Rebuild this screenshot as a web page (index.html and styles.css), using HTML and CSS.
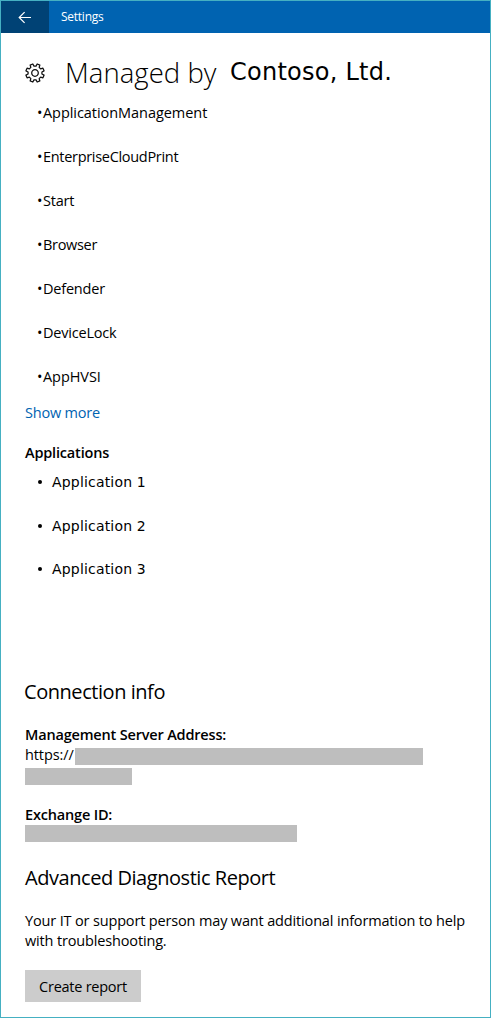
FILE: index.html
```html
<!DOCTYPE html>
<html lang="en">
<head>
<meta charset="utf-8">
<title>Settings</title>
<link rel="stylesheet" href="styles.css">
</head>
<body>
<div class="window">
  <header class="titlebar">
    <div class="back">
      <svg width="14" height="13" viewBox="0 0 14 13" fill="none" stroke="#fff" stroke-width="1.2"><path d="M13 6.5H1.2M6.6 1.1L1.2 6.5l5.4 5.4"/></svg>
    </div>
    <span class="titlebar-text">Settings</span>
  </header>
  <main class="content">
    <div class="heading">
      <svg class="gear" width="20" height="20" viewBox="-10 -10 20 20" fill="none" stroke="#111" stroke-width="1.25" stroke-linejoin="round"><path d="M6.92 1.03L9.04 2.17L7.93 4.86L5.63 4.16L4.16 5.63L4.86 7.93L2.17 9.04L1.03 6.92H-1.03L-2.17 9.04L-4.86 7.93L-4.16 5.63L-5.63 4.16L-7.93 4.86L-9.04 2.17L-6.92 1.03V-1.03L-9.04 -2.17L-7.93 -4.86L-5.63 -4.16L-4.16 -5.63L-4.86 -7.93L-2.17 -9.04L-1.03 -6.92H1.03L2.17 -9.04L4.86 -7.93L4.16 -5.63L5.63 -4.16L7.93 -4.86L9.04 -2.17L6.92 -1.03Z"/><circle r="3.3"/></svg>
      <h1 class="title">Managed by</h1>
      <span class="org">Contoso, Ltd.</span>
    </div>
    <ul class="policies">
      <li class="loose"><span class="bullet">•</span>ApplicationManagement</li>
      <li class="tight"><span class="bullet">•</span>EnterpriseCloudPrint</li>
      <li><span class="bullet">•</span>Start</li>
      <li class="tight"><span class="bullet">•</span>Browser</li>
      <li><span class="bullet">•</span>Defender</li>
      <li><span class="bullet">•</span>DeviceLock</li>
      <li class="loose"><span class="bullet">•</span>AppHVSI</li>
    </ul>
    <a class="more">Show more</a>
    <h3 class="label apps-label">Applications</h3>
    <ul class="apps">
      <li><i class="dot"></i>Application 1</li>
      <li><i class="dot"></i>Application 2</li>
      <li><i class="dot"></i>Application 3</li>
    </ul>
    <h2 class="section connection">Connection info</h2>
    <h3 class="label server-label">Management Server Address:</h3>
    <div class="address"><span class="url">https://</span><span class="redacted redacted-url"></span></div>
    <div class="redacted redacted-rest"></div>
    <h3 class="label exchange-label">Exchange ID:</h3>
    <div class="redacted redacted-id"></div>
    <h2 class="section report">Advanced Diagnostic Report</h2>
    <p class="text">Your IT or support person may want additional information to help<br>with troubleshooting.</p>
    <button class="button">Create report</button>
  </main>
</div>
</body>
</html>
```
FILE: styles.css
```css
* { box-sizing: border-box; }
body {
  margin: 0;
  background: #fff;
  color: #000;
  font: 14.5px/20px "Open Sans", "Noto Sans", sans-serif;
  white-space: nowrap;
}
h1, h2, h3, p, ul { margin: 0; padding: 0; }
ul { list-style: none; }
.window { height: 1018px; border: 1px solid #45b0c2; overflow: hidden; }
.titlebar { display: flex; align-items: center; height: 32px; background: #0063b1; color: #fff; }
.back { display: flex; align-items: center; justify-content: center; width: 48px; height: 32px; background: #004275; }
.titlebar-text { margin-left: 12px; font-size: 12px; letter-spacing: -0.25px; }
.content { padding: 0 24px; }
.heading { display: flex; height: 70px; }
.gear { margin-top: 30px; }
.title { margin: 20px 0 0 20px; width: 165px; font-size: 27.5px; line-height: 40px; font-weight: 300; letter-spacing: 0.05px; }
.org { font: 24px/40px "DejaVu Sans", sans-serif; margin-top: 19px; letter-spacing: 0.25px; }
.policies { display: grid; gap: 24px; padding-left: 12px; letter-spacing: -0.2px; }
.bullet { letter-spacing: 0.5px; }
.loose { letter-spacing: -0.05px; }
.tight { letter-spacing: -0.3px; }
.more { display: block; margin-top: 16px; color: #0063b1; letter-spacing: -0.2px; }
.label { font-size: 14.5px; font-weight: 600; letter-spacing: -0.18px; }
.apps-label { margin-top: 20px; }
.apps { display: grid; gap: 23.5px; margin-top: 9px; font: 14px/20px "DejaVu Sans", sans-serif; letter-spacing: 0.18px; }
.apps li { display: flex; align-items: center; padding-left: 13px; }
.dot { width: 4px; height: 4px; margin-right: 10px; border-radius: 50%; background: #000; }
.section { font-size: 20px; line-height: 28px; font-weight: 400; letter-spacing: -0.45px; }
.connection { margin: 99px 0 0 -1px; }
.server-label { margin-top: 19px; }
.address { display: flex; height: 20px; }
.url { width: 50px; letter-spacing: -0.1px; }
.redacted { height: 17px; background: #bebebe; }
.redacted-url { width: 348px; margin-top: 3px; }
.redacted-rest { width: 107px; margin-top: 3px; }
.exchange-label { margin-top: 20px; }
.redacted-id { width: 272px; }
.report { margin-top: 22px; }
.text { margin-top: 19px; letter-spacing: -0.155px; }
.button { display: block; width: 116px; height: 32px; margin-top: 19px; padding: 2px 0 0; border: 0; background: #ccc; color: #000; font: inherit; letter-spacing: -0.25px; }
```
